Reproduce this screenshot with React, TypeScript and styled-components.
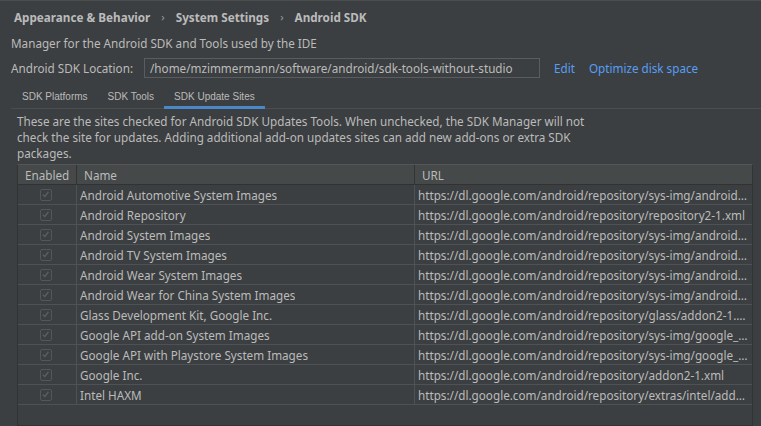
import React from "react";
import styled, { createGlobalStyle } from "styled-components";

const Global = createGlobalStyle`
  html, body { margin: 0; padding: 0; background: #3c3f41; }
  body { font-family: "Noto Sans", "DejaVu Sans", sans-serif; }
`;

const Page = styled.div`
  width: 761px;
  height: 426px;
  overflow: hidden;
  background: #3c3f41;
  border-top: 1px solid #4b4d4f;
  box-sizing: border-box;
  color: #bbbbbb;
  font-size: 11.7px;
  display: flex;
  flex-direction: column;
`;

const Breadcrumb = styled.div`
  display: flex;
  align-items: center;
  height: 31px;
  padding-left: 14px;
  font-weight: bold;
  font-size: 11.7px;
  gap: 11px;
  color: #bbbbbb;
`;

const Sep = styled.span`
  font-weight: normal;
  color: #9a9a9a;
  font-size: 11px;
`;

const Body = styled.div`
  padding-left: 11px;
  display: flex;
  flex-direction: column;
  flex: 1;
  min-height: 0;
`;

const Desc = styled.div`
  height: 22px;
  line-height: 22px;
`;

const LocationRow = styled.div`
  display: flex;
  align-items: center;
  height: 22px;
  margin-top: 3px;
`;

const Label = styled.span`
  width: 133px;
`;

const PathField = styled.div`
  width: 396px;
  height: 20px;
  box-sizing: border-box;
  border: 1px solid #5a5d5f;
  background: #3c3f41;
  padding-left: 5px;
  display: flex;
  align-items: center;
  color: #bbbbbb;
`;

const Link = styled.span<{ $ml: number }>`
  color: #589df6;
  margin-left: ${(p) => p.$ml}px;
`;

const Tabs = styled.div`
  display: flex;
  height: 23px;
  margin-top: 6px;
  padding-left: 1px;
  border-bottom: 1px solid #4b4d4f;
  font-family: "Liberation Sans", Arial, sans-serif;
  font-size: 10px;
`;

const Tab = styled.div<{ $active?: boolean }>`
  padding: 0 10px;
  display: flex;
  align-items: center;
  box-sizing: border-box;
  border-bottom: 3px solid ${(p) => (p.$active ? "#4a88c7" : "transparent")};
  margin-bottom: -1px;
  padding-top: 1px;
`;

const Panel = styled.div`
  padding-left: 6px;
  padding-right: 8px;
  display: flex;
  flex-direction: column;
  flex: 1;
  min-height: 0;
`;

const Intro = styled.div`
  line-height: 16px;
  padding-top: 4px;
  width: 590px;
  height: 55px;
  box-sizing: border-box;
`;

const Scroll = styled.div`
  flex: 1;
  border: 1px solid #313335;
  border-top: 1px solid #555;
  box-sizing: border-box;
  display: flex;
  flex-direction: column;
`;

const Row = styled.div<{ $head?: boolean }>`
  display: grid;
  grid-template-columns: 59px 338px 1fr;
  height: 20px;
  box-sizing: border-box;
  border-bottom: 1px solid ${(p) => (p.$head ? "#323232" : "#4f5254")};
  background: ${(p) => (p.$head ? "#45494a" : "transparent")};
`;

const Cell = styled.div<{ $head?: boolean; $center?: boolean; $last?: boolean }>`
  display: flex;
  align-items: center;
  justify-content: ${(p) => (p.$center ? "center" : "flex-start")};
  padding-left: ${(p) => (p.$center ? 0 : p.$head ? 7 : 3)}px;
  padding-right: 3px;
  border-right: ${(p) => (p.$last ? "none" : `1px solid ${p.$head ? "#313335" : "#4f5254"}`)};
  white-space: nowrap;
  overflow: hidden;
  min-width: 0;
`;

const Text = styled.span`
  overflow: hidden;
  text-overflow: ellipsis;
  white-space: nowrap;
`;

const Check = styled.span`
  width: 10px;
  height: 10px;
  border: 1px solid #545658;
  border-radius: 2px;
  display: flex;
  align-items: center;
  justify-content: center;
  background: #3c3f41;
`;

const CheckIcon = () => (
  <Check>
    <svg width="9" height="9" viewBox="0 0 9 9">
      <path d="M1.8 4.6 L3.8 6.6 L7.4 1.9" fill="none" stroke="#5e6163" strokeWidth="1.3" />
    </svg>
  </Check>
);

const rows: [string, string][] = [
  ["Android Automotive System Images", "https://dl.google.com/android/repository/sys-img/android-automotive/sys-img2-1.xml"],
  ["Android Repository", "https://dl.google.com/android/repository/repository2-1.xml"],
  ["Android System Images", "https://dl.google.com/android/repository/sys-img/android/sys-img2-1.xml"],
  ["Android TV System Images", "https://dl.google.com/android/repository/sys-img/android-tv/sys-img2-1.xml"],
  ["Android Wear System Images", "https://dl.google.com/android/repository/sys-img/android-wear/sys-img2-1.xml"],
  ["Android Wear for China System Images", "https://dl.google.com/android/repository/sys-img/android-wear-cn/sys-img2-1.xml"],
  ["Glass Development Kit, Google Inc.", "https://dl.google.com/android/repository/glass/addon2-1.xml"],
  ["Google API add-on System Images", "https://dl.google.com/android/repository/sys-img/google_apis/sys-img2-1.xml"],
  ["Google API with Playstore System Images", "https://dl.google.com/android/repository/sys-img/google_apis_playstore/sys-img2-1.xml"],
  ["Google Inc.", "https://dl.google.com/android/repository/addon2-1.xml"],
  ["Intel HAXM", "https://dl.google.com/android/repository/extras/intel/addon2-1.xml"],
];

export default function App() {
  return (
    <>
      <Global />
      <Page>
        <Breadcrumb>
          <span>Appearance &amp; Behavior</span>
          <Sep>›</Sep>
          <span>System Settings</span>
          <Sep>›</Sep>
          <span>Android SDK</span>
        </Breadcrumb>
        <Body>
          <Desc>Manager for the Android SDK and Tools used by the IDE</Desc>
          <LocationRow>
            <Label>Android SDK Location:</Label>
            <PathField>/home/mzimmermann/software/android/sdk-tools-without-studio</PathField>
            <Link $ml={14}>Edit</Link>
            <Link $ml={14}>Optimize disk space</Link>
          </LocationRow>
          <Tabs>
            <Tab>SDK Platforms</Tab>
            <Tab>SDK Tools</Tab>
            <Tab $active>SDK Update Sites</Tab>
          </Tabs>
          <Panel>
            <Intro>
              These are the sites checked for Android SDK Updates Tools. When unchecked, the SDK Manager will not
              check the site for updates. Adding additional add-on updates sites can add new add-ons or extra SDK
              packages.
            </Intro>
            <Scroll>
              <Row $head>
                <Cell $head>Enabled</Cell>
                <Cell $head>Name</Cell>
                <Cell $head $last>URL</Cell>
              </Row>
              {rows.map(([name, url]) => (
                <Row key={name}>
                  <Cell $center>
                    <CheckIcon />
                  </Cell>
                  <Cell>
                    <Text>{name}</Text>
                  </Cell>
                  <Cell $last>
                    <Text>{url}</Text>
                  </Cell>
                </Row>
              ))}
            </Scroll>
          </Panel>
        </Body>
      </Page>
    </>
  );
}
